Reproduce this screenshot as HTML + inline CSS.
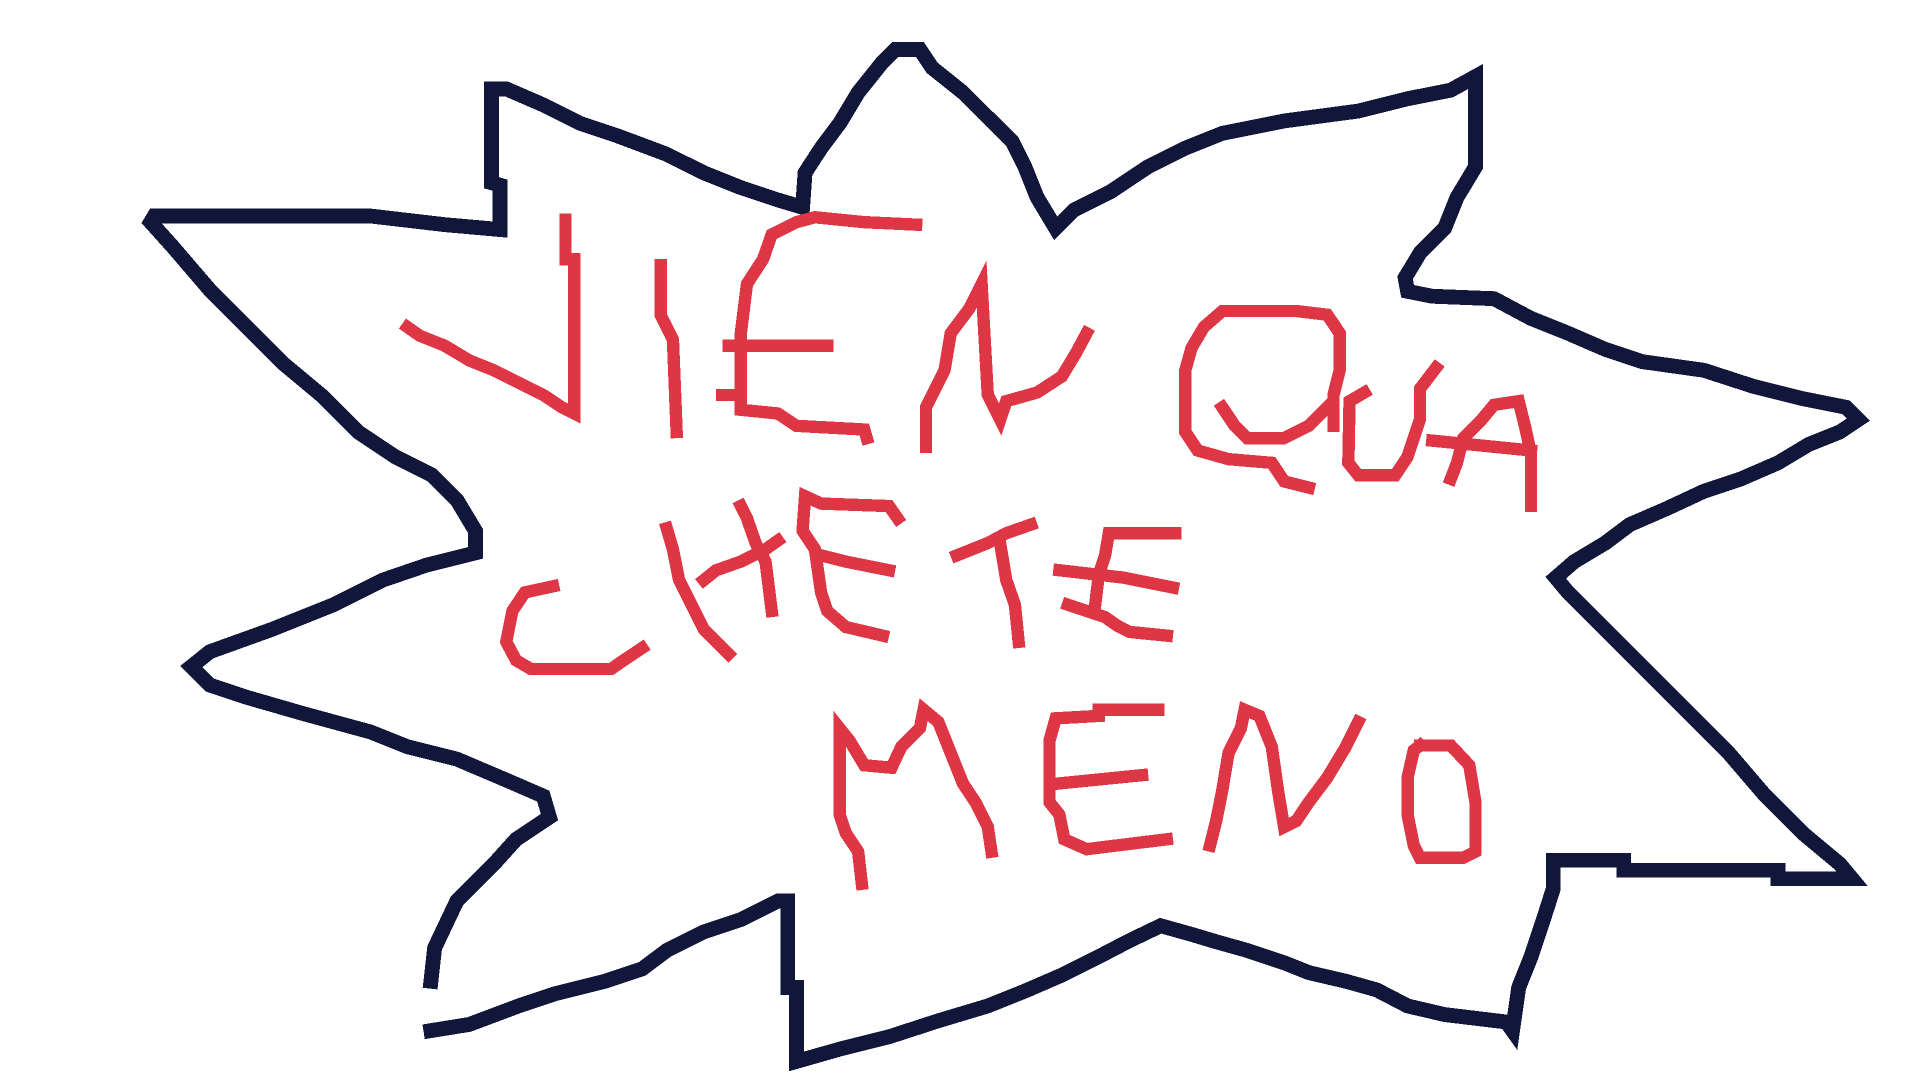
<!DOCTYPE html>
<html><head><style>html,body{margin:0;padding:0;background:#fff;overflow:hidden}svg{display:block}</style></head>
<body>
<svg width="1920" height="1080" viewBox="0 0 1555 875" preserveAspectRatio="none" xmlns="http://www.w3.org/2000/svg" shape-rendering="crispEdges">
<g fill="none" stroke-linejoin="miter" stroke-linecap="square">
<polyline stroke="#11173a" stroke-width="12" points="349,795 352,768 370,730 400,700 418,680 445,662 440,645 410,632 370,615 330,605 300,593 245,578 200,565 170,555 155,540 170,528 220,510 270,490 310,470 345,458 385,448 385,430 370,405 350,385 320,370 290,350 260,320 230,295 200,265 170,235 140,200 122,180 125,175 300,175 360,182 405,186 405,150 398,148 398,72 410,72 440,85 470,100 500,110 540,125 570,140 600,152 630,162 650,168 652,140 665,120 680,100 695,75 715,50 725,40 745,40 755,55 780,75 800,95 820,115 830,135 840,160 855,185 870,170 900,155 930,135 960,120 990,108 1040,98 1100,90 1140,80 1175,73 1195,62 1195,135 1180,160 1170,185 1150,205 1138,225 1140,236 1160,240 1210,242 1240,258 1270,270 1300,283 1330,293 1380,300 1420,313 1460,323 1495,330 1505,340 1490,350 1465,360 1440,375 1410,388 1380,398 1350,412 1320,425 1300,440 1275,455 1260,468 1270,480 1290,500 1310,520 1340,550 1370,580 1400,610 1430,645 1460,675 1490,700 1500,712 1440,712 1440,705 1315,705 1315,697 1258,697 1258,720 1250,745 1240,775 1230,800 1225,835 1220,828 1170,822 1140,815 1115,802 1090,795 1060,788 1040,780 1010,770 985,763 965,757 940,750 915,762 890,775 860,790 830,803 800,815 760,827 720,840 680,850 645,860 645,800 638,800 638,730 630,730 600,745 570,755 540,770 520,785 490,795 450,805 420,815 380,830 349,835"/>
<g stroke="#de3645" stroke-width="10">
<polyline points="330,265 340,272 360,280 380,292 400,300 420,310 440,320 455,330 465,335 465,210 458,210 458,178"/>
<polyline points="535,215 535,255 545,275 548,350"/>
<polyline points="742,182 700,180 660,176 645,180 625,190 618,210 605,230 600,270 600,320 585,320"/>
<polyline points="590,280 670,280"/>
<polyline points="600,320 600,332 630,335 645,345 700,348 702,355"/>
<polyline points="750,362 750,330 765,300 770,270 785,250 795,230 800,320 810,340 815,325 840,318 860,305 872,285 880,270"/>
<polyline points="1080,345 1080,320 1085,300 1085,270 1075,255 1050,252 990,252 975,265 965,282 960,300 960,350 970,365 995,372 1030,375 1040,390 1060,395"/>
<polyline points="990,330 1000,345 1010,355 1040,355 1060,345 1075,330"/>
<polyline points="1105,318 1093,325 1092,375 1100,385 1130,385 1140,370 1150,340 1150,315 1163,298"/>
<polyline points="1175,388 1180,375 1185,355 1200,340 1210,328 1230,325 1235,345 1240,368 1240,410"/>
<polyline points="1160,357 1240,365"/>
<polyline points="448,475 425,480 415,495 410,520 418,535 430,542 495,542 505,535 520,525"/>
<polyline points="540,428 545,445 550,470 560,490 570,510 580,520 590,530"/>
<polyline points="600,410 605,420 612,440 620,455 625,495"/>
<polyline points="570,470 580,462 600,455 620,445 630,438"/>
<polyline points="727,420 720,410 665,408 652,402 650,430 660,445 665,480 670,495 685,508 715,515"/>
<polyline points="665,450 685,455 720,462"/>
<polyline points="775,450 800,440 815,432 835,425"/>
<polyline points="810,440 815,470 822,490 825,520"/>
<polyline points="952,432 898,432 895,450 890,465 887,490"/>
<polyline points="858,462 910,468 950,476"/>
<polyline points="865,490 895,500 905,507 915,512 945,515"/>
<polyline points="698,716 695,690 685,675 680,660 680,590 688,600 700,620 722,622 730,605 745,590 748,575 760,585 770,610 780,635 790,650 800,670 803,690"/>
<polyline points="938,575 890,575 890,580 855,582 850,600 850,650 858,660 862,680 880,688 945,680"/>
<polyline points="855,635 925,628"/>
<polyline points="980,685 985,665 990,640 995,610 1005,590 1008,575 1020,580 1030,605 1035,640 1040,670 1050,665 1060,650 1075,630 1090,605 1100,585"/>
<polyline points="1150,604 1175,604 1190,620 1195,650 1195,690 1185,695 1150,695 1145,685 1140,660 1140,630 1145,608 1150,604"/>
</g></g>
</svg>
</body></html>
